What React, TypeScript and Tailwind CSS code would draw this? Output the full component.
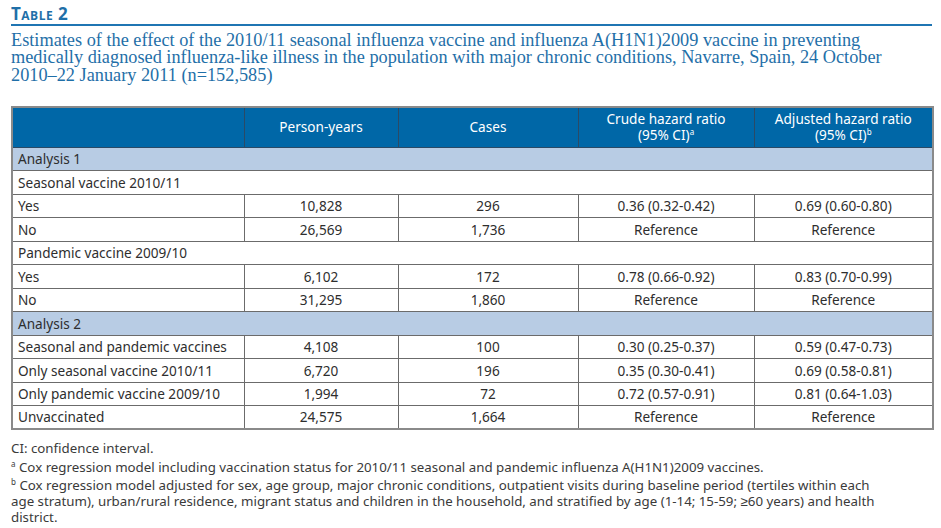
import React from "react";

type Row =
  | { kind: "section"; label: string }
  | { kind: "group"; label: string }
  | { kind: "data"; label: string; py: string; cases: string; crude: string; adj: string };

const rows: Row[] = [
  { kind: "section", label: "Analysis 1" },
  { kind: "group", label: "Seasonal vaccine 2010/11" },
  { kind: "data", label: "Yes", py: "10,828", cases: "296", crude: "0.36 (0.32-0.42)", adj: "0.69 (0.60-0.80)" },
  { kind: "data", label: "No", py: "26,569", cases: "1,736", crude: "Reference", adj: "Reference" },
  { kind: "group", label: "Pandemic vaccine 2009/10" },
  { kind: "data", label: "Yes", py: "6,102", cases: "172", crude: "0.78 (0.66-0.92)", adj: "0.83 (0.70-0.99)" },
  { kind: "data", label: "No", py: "31,295", cases: "1,860", crude: "Reference", adj: "Reference" },
  { kind: "section", label: "Analysis 2" },
  { kind: "data", label: "Seasonal and pandemic vaccines", py: "4,108", cases: "100", crude: "0.30 (0.25-0.37)", adj: "0.59 (0.47-0.73)" },
  { kind: "data", label: "Only seasonal vaccine 2010/11", py: "6,720", cases: "196", crude: "0.35 (0.30-0.41)", adj: "0.69 (0.58-0.81)" },
  { kind: "data", label: "Only pandemic vaccine 2009/10", py: "1,994", cases: "72", crude: "0.72 (0.57-0.91)", adj: "0.81 (0.64-1.03)" },
  { kind: "data", label: "Unvaccinated", py: "24,575", cases: "1,664", crude: "Reference", adj: "Reference" },
];

const cell = "border border-[#6b6b6b] h-[23.5px] py-0 leading-none";

function Sup({ c }: { c: string }) {
  return <span className="relative -top-[5px] text-[8px] leading-none">{c}</span>;
}

export default function App() {
  return (
    <div className="w-[941px] h-[528px] bg-white overflow-hidden pl-[11px] pr-[9px] pt-[5px] font-['Noto_Sans',sans-serif]">
      {/* Title */}
      <div className="border-b-2 border-[#1f75b3] pb-[1px]">
        <h2 className="text-[#1f6fa8] font-bold text-[17px] leading-[18px] [font-variant:small-caps] tracking-[0.5px] font-['Open_Sans',sans-serif]">
          Table 2
        </h2>
      </div>
      <p className="mt-[6px] text-[#1f6fa8] font-['Liberation_Serif',serif] text-[18.3px] leading-[17.4px]">
        Estimates of the effect of the 2010/11 seasonal influenza vaccine and influenza A(H1N1)2009 vaccine in preventing
        <br />
        medically diagnosed influenza-like illness in the population with major chronic conditions, Navarre, Spain, 24 October
        <br />
        2010–22 January 2011 (n=152,585)
      </p>

      {/* Table */}
      <table className="mt-[22px] border-collapse w-[921px] table-fixed text-[13.6px] text-[#2e2e2e] border-2 border-[#8a8a8a]">
        <colgroup>
          <col className="w-[232px]" />
          <col className="w-[154px]" />
          <col className="w-[180px]" />
          <col className="w-[176px]" />
          <col className="w-[179px]" />
        </colgroup>
        <thead>
          <tr className="bg-[#0067a7] text-white h-[40px]">
            <th className="border border-[#2a4a66] font-normal"></th>
            <th className="border border-[#2a4a66] font-normal">Person-years</th>
            <th className="border border-[#2a4a66] font-normal">Cases</th>
            <th className="border border-[#2a4a66] font-normal leading-[16px]">
              Crude hazard ratio
              <br />
              (95% CI)<Sup c="a" />
            </th>
            <th className="border border-[#2a4a66] font-normal leading-[16px]">
              Adjusted hazard ratio
              <br />
              (95% CI)<Sup c="b" />
            </th>
          </tr>
        </thead>
        <tbody>
          {rows.map((r, i) => {
            if (r.kind === "section") {
              return (
                <tr key={i} className="bg-[#b8cce4]">
                  <td colSpan={5} className={`${cell} px-[5px]`}>
                    {r.label}
                  </td>
                </tr>
              );
            }
            if (r.kind === "group") {
              return (
                <tr key={i}>
                  <td colSpan={5} className={`${cell} px-[5px]`}>
                    {r.label}
                  </td>
                </tr>
              );
            }
            return (
              <tr key={i}>
                <td className={`${cell} px-[5px]`}>{r.label}</td>
                <td className={`${cell} text-center`}>{r.py}</td>
                <td className={`${cell} text-center`}>{r.cases}</td>
                <td className={`${cell} text-center`}>{r.crude}</td>
                <td className={`${cell} text-center`}>{r.adj}</td>
              </tr>
            );
          })}
        </tbody>
      </table>

      {/* Notes */}
      <div className="mt-[10px] text-[13.3px] text-[#3a3a3a] leading-[16px] space-y-[2.5px]">
        <p>CI: confidence interval.</p>
        <p>
          <Sup c="a" /> Cox regression model including vaccination status for 2010/11 seasonal and pandemic influenza A(H1N1)2009 vaccines.
        </p>
        <p>
          <Sup c="b" /> Cox regression model adjusted for sex, age group, major chronic conditions, outpatient visits during baseline period (tertiles within each
          <br />
          age stratum), urban/rural residence, migrant status and children in the household, and stratified by age (1-14; 15-59; ≥60 years) and health
          <br />
          district.
        </p>
      </div>
    </div>
  );
}
